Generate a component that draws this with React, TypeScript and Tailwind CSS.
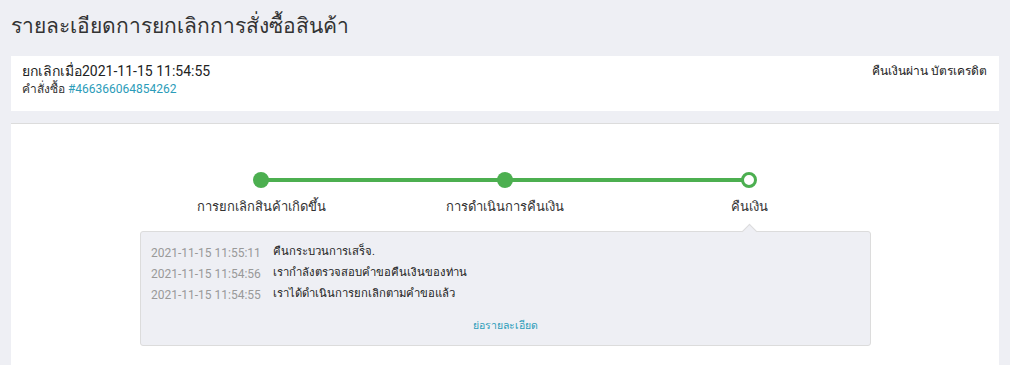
const steps = ['การยกเลิกสินค้าเกิดขึ้น', 'การดำเนินการคืนเงิน', 'คืนเงิน'];

const logs = [
  { time: '2021-11-15 11:55:11', text: 'คืนกระบวนการเสร็จ.' },
  { time: '2021-11-15 11:54:56', text: 'เรากำลังตรวจสอบคำขอคืนเงินของท่าน' },
  { time: '2021-11-15 11:54:55', text: 'เราได้ดำเนินการยกเลิกตามคำขอแล้ว' },
];

export default function App() {
  return (
    <div
      className="min-h-[365px] bg-[#eeeff4] px-[11px] text-[#333]"
      style={{ fontFamily: 'Roboto, "Noto Sans", Tahoma, sans-serif' }}
    >
      <h1 className="h-[56px] pt-[10px] text-[21px] leading-[32px] text-[#333]">
        รายละเอียดการยกเลิกการสั่งซื้อสินค้า
      </h1>

      <div className="flex h-[55px] justify-between bg-white pl-[11px] pr-[12px] pt-[7px]">
        <div>
          <div className="text-[14px] leading-[17px] text-[#222]">ยกเลิกเมื่อ2021-11-15 11:54:55</div>
          <div className="text-[12px] leading-[18px] text-[#333]">
            คำสั่งซื้อ <span className="text-[#2b9cb9]">#466366064854262</span>
          </div>
        </div>
        <div className="text-[12px] leading-[17px] text-[#222]">คืนเงินผ่าน บัตรเครดิต</div>
      </div>

      <div className="mt-[12px] h-[242px] border-t border-[#dcdcdc] bg-white pt-[48px]">
        <div className="mx-auto w-[732px]">
          <div className="grid grid-cols-3">
            {steps.map((s, i) => (
              <div key={s} className="flex flex-col items-center">
                <div className="relative flex h-[16px] w-full justify-center">
                  {i > 0 && <div className="absolute left-0 right-1/2 top-[6px] h-[4px] bg-[#4caf50]" />}
                  {i < 2 && <div className="absolute left-1/2 right-0 top-[6px] h-[4px] bg-[#4caf50]" />}
                  <div
                    className={
                      i < 2
                        ? 'relative h-[16px] w-[16px] rounded-full bg-[#4caf50]'
                        : 'relative h-[16px] w-[16px] rounded-full border-[3px] border-[#4caf50] bg-white'
                    }
                  />
                </div>
                <div className="mt-[10px] text-[13px] leading-[17px] text-[#333]">{s}</div>
              </div>
            ))}
          </div>

          <div className="relative ml-[1px] mt-[16px] rounded-[3px] border border-[#dcdcdc] bg-[#eeeff4] px-[10px] pb-[12px] pt-[10px]">
            <div className="absolute -top-[6px] left-[603px] h-[11px] w-[11px] rotate-45 border-l border-t border-[#dcdcdc] bg-[#eeeff4]" />
            {logs.map((l) => (
              <div key={l.time} className="flex h-[21px] items-center text-[12px]">
                <span className="w-[122px] text-[#999]">{l.time}</span>
                <span className="text-[11.3px] text-[#222]">{l.text}</span>
              </div>
            ))}
            <div className="mt-[14px] text-center text-[10.5px] leading-[14px] text-[#2b9cb9]">ย่อรายละเอียด</div>
          </div>
        </div>
      </div>
    </div>
  );
}
